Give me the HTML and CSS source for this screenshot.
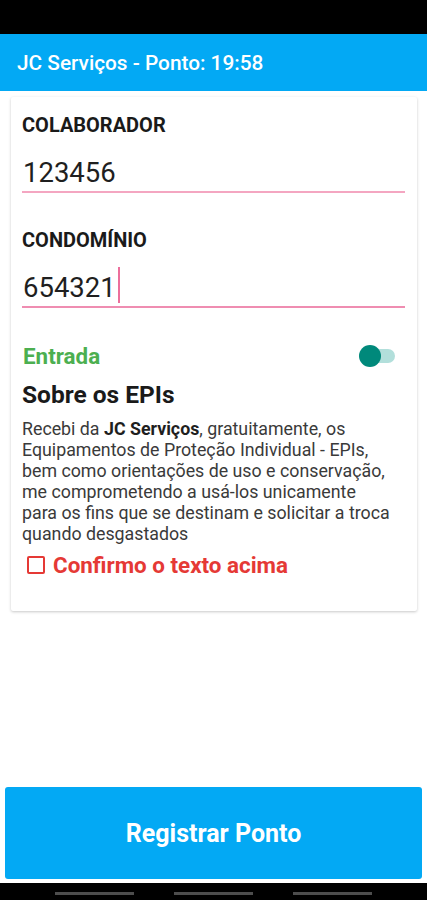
FILE: index.html
```html
<!DOCTYPE html>
<html lang="pt-BR">
<head>
  <meta charset="UTF-8">
  <meta name="viewport" content="width=device-width, initial-scale=1.0">
  <title>JC Serviços - Ponto</title>
  <link rel="stylesheet" href="styles.css">
</head>
<body>
  <!-- Barra de status -->
  <div class="status-bar"></div>

  <!-- Barra do app -->
  <header class="toolbar">
    <h1 class="toolbar-title">JC Serviços - Ponto: 19:58</h1>
  </header>

  <main class="content">
    <section class="card">
      <div class="field-label">COLABORADOR</div>
      <div class="field">123456</div>

      <div class="field-label field-label-next">CONDOMÍNIO</div>
      <div class="field field-focused">654321<span class="caret"></span></div>

      <!-- Entrada / Saída -->
      <div class="switch-row">
        <span class="switch-label">Entrada</span>
        <span class="switch">
          <span class="switch-track"></span>
          <span class="switch-thumb"></span>
        </span>
      </div>

      <h2 class="epi-title">Sobre os EPIs</h2>
      <p class="epi-text">Recebi da <b>JC Serviços</b>, gratuitamente, os<br>Equipamentos de Proteção Individual - EPIs,<br>bem como orientações de uso e conservação,<br>me comprometendo a usá-los unicamente<br>para os fins que se destinam e solicitar a troca<br>quando desgastados</p>

      <label class="confirm">
        <span class="checkbox"></span>
        Confirmo o texto acima
      </label>
    </section>
  </main>

  <button class="register-button">Registrar Ponto</button>

  <!-- Barra de navegação -->
  <nav class="nav-bar">
    <span class="nav-line"></span>
    <span class="nav-line"></span>
    <span class="nav-line"></span>
  </nav>
</body>
</html>
```

FILE: styles.css
```css
body {
  font-family: Roboto, "Liberation Sans", Arial, sans-serif;
  margin: 0;
  padding: 0;
  height: 900px;
  background-color: #ffffff;
  color: #212121;
  display: flex;
  flex-direction: column;
}
.status-bar {
  height: 34px;
  background-color: #000000;
}
.toolbar {
  height: 57px;
  background-color: #03a9f4;
  display: flex;
  align-items: center;
  padding-left: 17px;
}
.toolbar-title {
  margin: 0;
  font-size: 20.8px;
  font-weight: 500;
  color: #ffffff;
}
.content {
  flex: 1;
  padding: 6px 10px 0 11px;
}
.card {
  background-color: #ffffff;
  border-radius: 2px;
  box-shadow: 0 1px 3px rgba(0, 0, 0, 0.22);
  padding: 16px 12px 33px 11px;
}
.field-label {
  font-size: 20px;
  font-weight: bold;
  line-height: 24px;
  color: #1a1a1a;
}
.field-label-next {
  margin-top: 35px;
}
.field {
  margin-top: 20px;
  padding-left: 1px;
  font-size: 27.5px;
  line-height: 32px;
  padding-bottom: 2px;
  border-bottom: 2px solid #f4a6c1;
  color: #1f1f1f;
}
.field-focused {
  border-bottom-color: #ef8db1;
}
/* Cursor do campo em foco */
.caret {
  display: inline-block;
  width: 2px;
  height: 36px;
  margin-top: -6px;
  margin-left: 2px;
  vertical-align: -6px;
  background-color: #ec6f9c;
}
.switch-row {
  margin-top: 35px;
  display: flex;
  align-items: center;
  justify-content: space-between;
  height: 26px;
}
.switch-label {
  padding-left: 1px;
  font-size: 22.4px;
  font-weight: bold;
  color: #4caf50;
  line-height: 26px;
}
.switch {
  position: relative;
  width: 36px;
  height: 22px;
  margin-right: 10px;
}
.switch-track {
  position: absolute;
  left: 10px;
  right: 0;
  top: 4px;
  height: 14px;
  border-radius: 7px;
  background-color: #b2dfdb;
}
.switch-thumb {
  position: absolute;
  left: 0;
  top: 0;
  width: 22px;
  height: 22px;
  border-radius: 50%;
  background-color: #00897b;
}
.epi-title {
  margin: 12px 0 0 0;
  font-size: 24.5px;
  line-height: 28px;
  font-weight: bold;
  color: #1a1a1a;
}
.epi-text {
  margin: 9px 0 0 0;
  font-size: 17.8px;
  line-height: 21px;
  white-space: nowrap;
  color: #3a3a3a;
}
.epi-text b {
  color: #1f1f1f;
}
.confirm {
  margin-top: 8px;
  display: flex;
  align-items: center;
  font-size: 22.4px;
  font-weight: bold;
  line-height: 26px;
  color: #e53935;
}
.checkbox {
  width: 14px;
  height: 14px;
  border: 2px solid #e53935;
  border-radius: 2px;
  margin: 0 8px 0 5px;
}
.register-button {
  margin: 0 5px 4px 5px;
  height: 92px;
  border: none;
  border-radius: 3px;
  background-color: #03a9f4;
  color: #ffffff;
  font-family: Roboto, "Liberation Sans", Arial, sans-serif;
  font-size: 25px;
  font-weight: bold;
}
.nav-bar {
  height: 17px;
  background-color: #000000;
  display: flex;
  justify-content: center;
  gap: 40px;
  padding-top: 9px;
  box-sizing: border-box;
}
.nav-line {
  width: 79px;
  height: 3px;
  background-color: #4d4d4d;
}
```
